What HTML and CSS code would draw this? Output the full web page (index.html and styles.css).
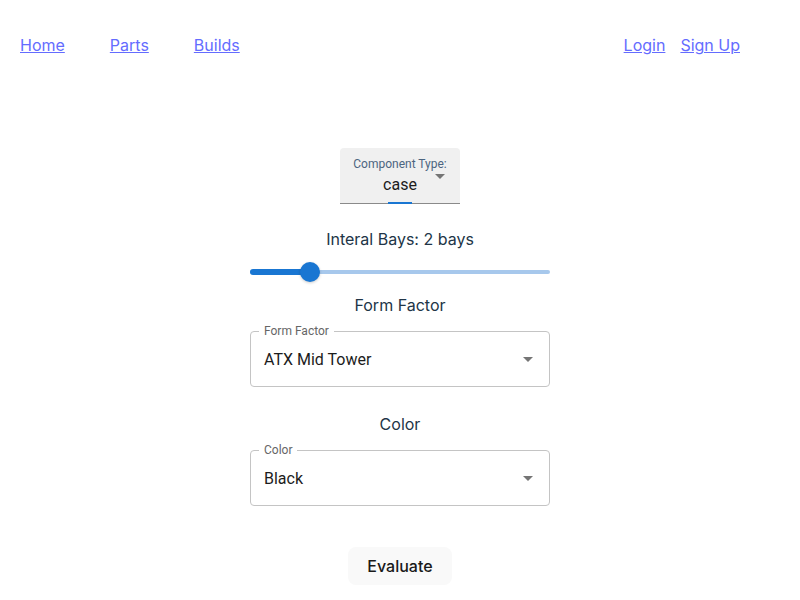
FILE: index.html
```html
<!DOCTYPE html>
<html>
<head>
<meta charset="utf-8">
<link rel="stylesheet" href="styles.css">
</head>
<body>
<nav class="nav">
  <div class="nav-left">
    <a href="#">Home</a>
    <a href="#">Parts</a>
    <a href="#">Builds</a>
  </div>
  <div class="nav-right">
    <a href="#">Login</a>
    <a href="#">Sign Up</a>
  </div>
</nav>
<main class="main">
  <div class="filled-select">
    <span class="filled-label">Component Type:</span>
    <span class="filled-value">case</span>
    <span class="arrow filled-arrow"></span>
    <span class="focus-line"></span>
  </div>
  <div class="heading bays">Interal Bays: 2 bays</div>
  <div class="slider">
    <div class="rail"></div>
    <div class="track"></div>
    <div class="thumb"></div>
  </div>
  <div class="heading ff">Form Factor</div>
  <div class="outlined">
    <span class="outlined-label">Form Factor</span>
    <span class="outlined-value">ATX Mid Tower</span>
    <span class="arrow"></span>
  </div>
  <div class="heading color">Color</div>
  <div class="outlined">
    <span class="outlined-label">Color</span>
    <span class="outlined-value">Black</span>
    <span class="arrow"></span>
  </div>
  <button class="btn">Evaluate</button>
</main>
</body>
</html>
```
FILE: styles.css
```css
* { box-sizing: border-box; }
html, body { margin: 0; padding: 0; background: #fff; }
body {
  font-family: Inter, "Liberation Sans", sans-serif;
  color: #213547;
  font-size: 16px;
  line-height: 24px;
}
.nav {
  display: flex;
  justify-content: space-between;
  padding: 33px 60px 0 20px;
}
.nav a {
  color: #646cff;
  text-decoration: underline;
}
.nav-left { display: flex; gap: 45px; }
.nav-right { display: flex; gap: 15px; }
.main {
  display: flex;
  flex-direction: column;
  align-items: center;
  padding-top: 91px;
}
.filled-select {
  position: relative;
  width: 120px;
  height: 56px;
  background: #f0f0f0;
  border-radius: 4px 4px 0 0;
  border-bottom: 1px solid #8a8a8a;
  font-family: Roboto, sans-serif;
  display: flex;
  flex-direction: column;
  align-items: center;
}
.filled-label {
  font-size: 12px;
  line-height: 14px;
  color: #4c6580;
  margin-top: 9px;
}
.filled-value {
  font-size: 16px;
  line-height: 20px;
  color: #1c1c1c;
  margin-top: 4px;
}
.arrow {
  position: absolute;
  right: 16px;
  top: 26px;
  width: 0; height: 0;
  border-left: 5px solid transparent;
  border-right: 5px solid transparent;
  border-top: 5px solid #757575;
}
.filled-arrow { right: 15px; top: 26px; }
.focus-line {
  position: absolute;
  left: 48px;
  width: 24px;
  bottom: -1px;
  height: 2px;
  background: #1976d2;
}
.heading { text-align: center; }
.bays { margin-top: 23px; }
.slider {
  position: relative;
  width: 300px;
  height: 20px;
  margin-top: 11px;
}
.rail {
  position: absolute;
  left: 0; right: 0; top: 8px;
  height: 4px;
  border-radius: 2px;
  background: #a7c8ec;
}
.track {
  position: absolute;
  left: 0; width: 60px; top: 7px;
  height: 6px;
  border-radius: 3px;
  background: #1976d2;
}
.thumb {
  position: absolute;
  left: 50px; top: 0;
  width: 20px; height: 20px;
  border-radius: 50%;
  background: #1976d2;
  box-shadow: 0 1px 3px rgba(0,0,0,0.2);
}
.ff { margin-top: 11px; }
.outlined {
  position: relative;
  width: 300px;
  height: 56px;
  border: 1px solid #c4c4c4;
  border-radius: 4px;
  margin-top: 14px;
  font-family: Roboto, sans-serif;
  display: flex;
  align-items: center;
  padding-left: 13px;
}
.outlined-label {
  position: absolute;
  top: -8px;
  left: 8px;
  padding: 0 5px;
  background: #fff;
  font-size: 12px;
  line-height: 14px;
  color: #666;
}
.outlined-value {
  font-size: 16px;
  color: #1c1c1c;
  margin-top: 1px;
}
.outlined .arrow { right: 16px; top: 25px; }
.color { margin-top: 25px; }
.btn {
  margin-top: 41px;
  width: 104px;
  height: 38px;
  border: 1px solid transparent;
  border-radius: 8px;
  background: #f9f9f9;
  font-family: Inter, "Liberation Sans", sans-serif;
  font-size: 16px;
  font-weight: 500;
  color: #1a1a1a;
  cursor: pointer;
}
```
